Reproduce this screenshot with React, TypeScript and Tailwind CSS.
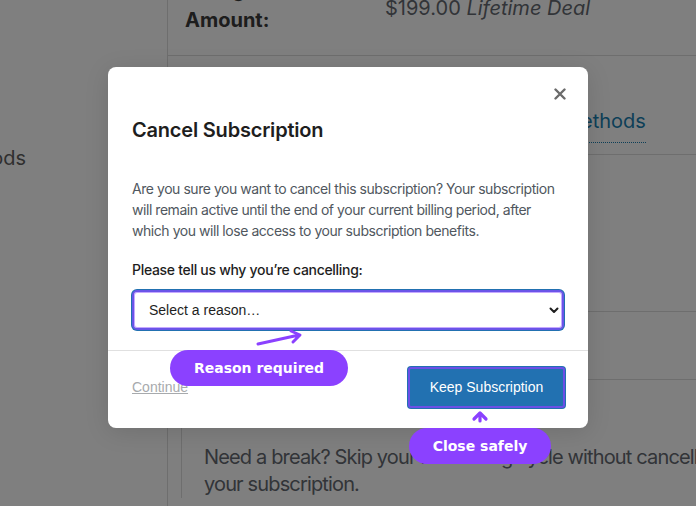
import React from "react";

// Account page shown underneath the dialog.
function AccountPage() {
  return (
    <div className="flex h-full">
      <aside className="w-[168px] shrink-0 overflow-hidden border-r border-[#dcdcdc]">
        <div className="-ml-[145px] whitespace-nowrap pt-[144px] text-[20px] leading-[28px] text-[#5f5f5f]">
          Payment Methods
        </div>
      </aside>
      <main className="-mt-[40px] min-w-0 flex-1">
        <div className="flex h-[96px] items-start border-b border-[#dcdcdc]">
          <div className="w-[217px] shrink-0 pl-[17px] pt-[15px] text-[20px] font-bold leading-[30px] text-[#3a3a3a]">
            <div className="w-[110px]">Billing Amount:</div>
          </div>
          <div className="whitespace-nowrap pt-[34px] text-[20px] leading-[28px] text-[#646970]">
            $199.00 <em>Lifetime Deal</em>
          </div>
        </div>
        <div className="flex h-[99px] items-end border-b border-[#dcdcdc] pb-[11px]">
          <div className="w-[217px] shrink-0" />
          <a className="ml-[8px] whitespace-nowrap border-b border-dotted border-[#1a7fb0] pb-[7px] text-[20px] leading-[28px] text-[#1a7fb0]">
            Manage Payment Methods
          </a>
        </div>
        <div className="h-[157px] border-b border-[#dcdcdc]" />
        <div className="h-[68px] border-b border-[#dcdcdc]" />
        <div className="pt-[12px]">
          <div className="ml-[13px] border-l border-[#dcdcdc] pl-[22px] pt-[8px]">
            <h3 className="whitespace-nowrap text-[20px] font-semibold leading-[28px] text-[#3a3a3a]">
              Pause Billing
            </h3>
            <p className="mt-[16px] whitespace-nowrap text-[20px] leading-[27px] tracking-[-0.85px] text-[#646970]">
              Need a break? Skip your next billing cycle without cancelling
              <br />
              your subscription.
            </p>
          </div>
        </div>
      </main>
    </div>
  );
}

function CloseIcon() {
  return (
    <svg width="12" height="12" viewBox="0 0 12 12" fill="none">
      <path d="M1.5 1.5 L10.5 10.5 M10.5 1.5 L1.5 10.5" stroke="#6b6b6b" strokeWidth="2.4" strokeLinecap="round" />
    </svg>
  );
}

function CancelDialog() {
  return (
    <div className="relative h-fit w-[480px] rounded-lg bg-white shadow-[0_4px_24px_rgba(0,0,0,0.12)]">
      <button className="absolute right-[22px] top-[21px] flex h-[12px] w-[12px] items-center justify-center">
        <CloseIcon />
      </button>
      <div className="px-6 pt-[49px]">
        <h2 className="text-[20px] font-semibold leading-[28px] tracking-[-0.2px] text-[#1e1e1e]">
          Cancel Subscription
        </h2>
        <p className="mt-[34px] text-[14px] leading-[21px] tracking-[-0.45px] text-[#50575e]">
          Are you sure you want to cancel this subscription? Your subscription will remain active until the end
          of your current billing period, after which you will lose access to your subscription benefits.
        </p>
        <label className="mt-[19px] block text-[14px] font-medium leading-[20px] tracking-[-0.3px] text-[#1e1e1e]">
          Please tell us why you’re cancelling:
        </label>
        <div className="relative mt-[10px]">
          <select className="h-[40px] w-full appearance-none rounded-[5px] border-2 border-[#6a55e8] bg-white pl-[15px] font-['Liberation_Sans',Arial,sans-serif] text-[14px] text-[#1e1e1e] shadow-[inset_0_0_0_1px_#c6a8ff,0_0_0_1px_#2271b1] outline-none">
            <option>Select a reason…</option>
          </select>
          <svg
            className="pointer-events-none absolute right-[5px] top-[17px]"
            width="10"
            height="7"
            viewBox="0 0 10 7"
            fill="none"
          >
            <path d="M1.5 1.5 L5 5 L8.5 1.5" stroke="#1e1e1e" strokeWidth="2" strokeLinecap="round" strokeLinejoin="round" />
          </svg>
        </div>
      </div>
      <div className="mt-[20px] flex items-center justify-between border-t border-[#e0e0e0] pb-[20px] pl-6 pr-[23px] pt-[16px]">
        <a className="font-['Liberation_Sans',Arial,sans-serif] text-[14px] text-[#a7aaad] underline">Continue</a>
        <button className="h-[41px] w-[157px] rounded-[3px] border-2 border-[#6b4fe6] bg-[#2271b1] font-['Liberation_Sans',Arial,sans-serif] text-[14px] text-white shadow-[0_0_0_1px_#2271b1]">
          Keep Subscription
        </button>
      </div>
    </div>
  );
}

export default function App() {
  return (
    <div className="relative h-[506px] w-[696px] overflow-hidden bg-white font-['Inter',sans-serif]">
      <AccountPage />
      <div className="absolute inset-0 flex justify-center bg-black/50 pt-[67px]">
        <CancelDialog />
      </div>

      {/* callout arrows */}
      <svg className="pointer-events-none absolute left-0 top-0" width="696" height="506" fill="none">
        <path
          d="M258 344 L299 335 M291 331 L300 335 L293 342"
          stroke="#8b41ff"
          strokeWidth="3"
          strokeLinecap="round"
          strokeLinejoin="round"
        />
        <path
          d="M474 419 L480 413 L486 419 M480 413 L480 421"
          stroke="#8b41ff"
          strokeWidth="3.2"
          strokeLinecap="round"
          strokeLinejoin="round"
        />
      </svg>

      {/* callout labels */}
      <div className="absolute left-[170px] top-[350px] flex h-[36px] w-[178px] items-center justify-center rounded-full bg-[#8b41ff] font-['DejaVu_Sans',sans-serif] text-[14px] font-bold text-white">
        Reason required
      </div>
      <div className="absolute left-[409px] top-[428px] flex h-[36px] w-[142px] items-center justify-center rounded-full bg-[#8b41ff] font-['DejaVu_Sans',sans-serif] text-[14px] font-bold text-white">
        Close safely
      </div>
    </div>
  );
}
